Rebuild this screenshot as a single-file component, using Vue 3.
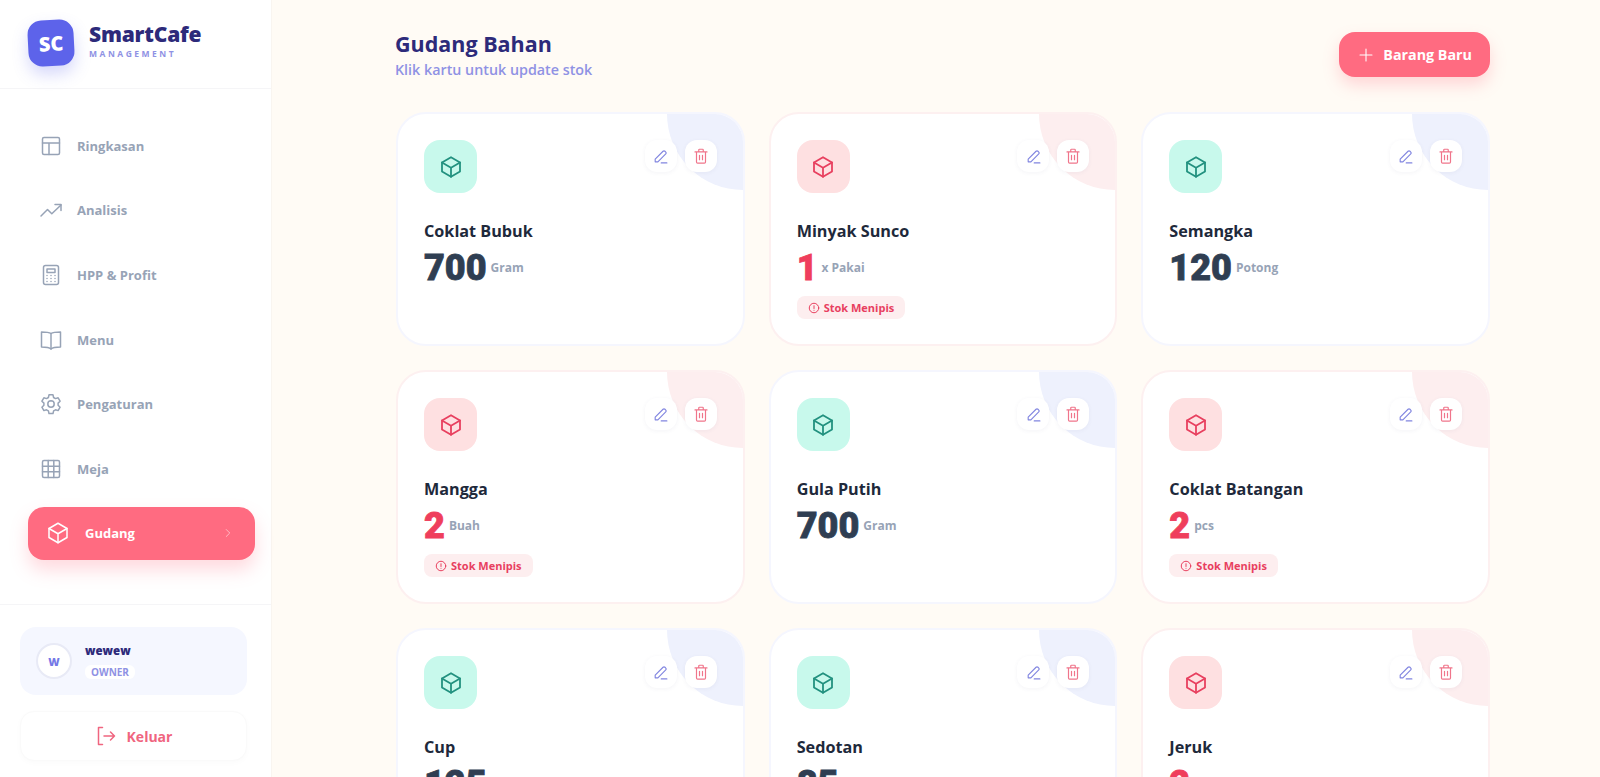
<template>
  <div class="app">
    <aside class="sidebar">
      <div class="brand">
        <div class="logo">SC</div>
        <div class="brand-text">
          <div class="brand-name">SmartCafe</div>
          <div class="brand-sub">MANAGEMENT</div>
        </div>
      </div>

      <nav class="nav">
        <div v-for="item in navItems" :key="item.label" class="nav-item" :class="{ active: item.active }">
          <svg class="nav-icon" viewBox="0 0 24 24" fill="none" stroke="currentColor" stroke-width="1.5" stroke-linecap="round" stroke-linejoin="round">
            <path v-for="d in item.paths" :key="d" :d="d" />
          </svg>
          <span class="nav-label">{{ item.label }}</span>
          <svg v-if="item.active" class="nav-chevron" viewBox="0 0 24 24" fill="none" stroke="currentColor" stroke-width="1.5" stroke-linecap="round" stroke-linejoin="round">
            <path d="M9 6l6 6-6 6" />
          </svg>
        </div>
      </nav>

      <div class="side-bottom">
        <div class="user">
          <div class="avatar">W</div>
          <div>
            <div class="user-name">wewew</div>
            <span class="user-role">OWNER</span>
          </div>
        </div>
        <button class="logout">
          <svg class="logout-icon" viewBox="0 0 24 24" fill="none" stroke="currentColor" stroke-width="1.5" stroke-linecap="round" stroke-linejoin="round">
            <path d="M7.500 3.500H3.500v17h4" />
            <path d="M9 12h10.500M15.500 8l4 4-4 4" />
          </svg>
          Keluar
        </button>
      </div>
    </aside>

    <main class="main">
      <header class="head">
        <div class="head-text">
          <h1 class="title">Gudang Bahan</h1>
          <p class="subtitle">Klik kartu untuk update stok</p>
        </div>
        <button class="add-btn">
          <svg class="add-icon" viewBox="0 0 24 24" fill="none" stroke="currentColor" stroke-width="1.6" stroke-linecap="round">
            <path d="M12 3v18M3 12h18" />
          </svg>
          Barang Baru
        </button>
      </header>

      <section class="grid">
        <article v-for="card in items" :key="card.name" class="card" :class="{ low: isLow(card) }">
          <div class="corner"></div>
          <div class="card-top">
            <div class="box">
              <svg class="box-icon" viewBox="0 0 24 24" fill="none" stroke="currentColor" stroke-width="1.8" stroke-linecap="round" stroke-linejoin="round">
                <path :d="cubeOutline" />
                <path :d="cubeInner" />
              </svg>
            </div>
            <div class="actions">
              <button class="act edit">
                <svg viewBox="0 0 24 24" fill="none" stroke="currentColor" stroke-width="1.600" stroke-linecap="round" stroke-linejoin="round">
                  <path d="M4.500 19.500v-3.800L15.600 4.600a1.900 1.900 0 0 1 2.700 0l1.100 1.100a1.900 1.900 0 0 1 0 2.700L8.300 19.500H4.500" />
                  <path d="M13 21h8" />
                </svg>
              </button>
              <button class="act del">
                <svg viewBox="0 0 24 24" fill="none" stroke="currentColor" stroke-width="1.600" stroke-linecap="round" stroke-linejoin="round">
                  <path d="M4 6.500h16M9 6.500V4a1 1 0 0 1 1-1h4a1 1 0 0 1 1 1v2.500M6 6.500V20a1.500 1.500 0 0 0 1.500 1.500h9A1.500 1.500 0 0 0 18 20V6.500M10 11v6M14 11v6" />
                </svg>
              </button>
            </div>
          </div>
          <h3 class="name">{{ card.name }}</h3>
          <div class="stock">
            <span class="qty">{{ card.qty }}</span>
            <span class="unit">{{ card.unit }}</span>
          </div>
          <div v-if="isLow(card)" class="warn">
            <svg class="warn-icon" viewBox="0 0 24 24" fill="none" stroke="currentColor" stroke-width="2" stroke-linecap="round">
              <circle cx="12" cy="12" r="9.500" />
              <path d="M12 7.500v5.500M12 16.500v.1" />
            </svg>
            Stok Menipis
          </div>
        </article>
      </section>
    </main>
  </div>
</template>

<script setup>
const cubeOutline = "M12 2.250l9 5.250v9l-9 5.250-9-5.250v-9z";
const cubeInner = "M3 7.500l9 5.250 9-5.250M12 12.750v9";

const navItems = [
  { label: "Ringkasan", paths: ["M5 3.500h14A1.500 1.500 0 0 1 20.500 5v14a1.500 1.500 0 0 1-1.500 1.500H5A1.500 1.500 0 0 1 3.500 19V5A1.500 1.500 0 0 1 5 3.500z", "M3.500 9h17M10 9v11.500"] },
  { label: "Analisis", paths: ["M2 18l6.500-6.500 4.300 4.300L22 7", "M16 6.500h6v6"] },
  { label: "HPP & Profit", paths: ["M6.500 2.500h11A2 2 0 0 1 19.500 4.500v15a2 2 0 0 1-2 2h-11a2 2 0 0 1-2-2v-15a2 2 0 0 1 2-2z", "M8 6h8v3.500H8z", "M8 12.500h.01M12 12.500h.01M16 12.500h.01M8 15.500h.01M12 15.500h.01M16 15.500h.01M8 18.500h.01M12 18.500h.01M16 18.500h.01"] },
  { label: "Menu", paths: ["M12 5.500C10.500 4.500 8 4 2.500 4v15C8 19 10.500 19.500 12 21 13.500 19.500 16 19 21.500 19V4C16 4 13.500 4.500 12 5.500z", "M12 5.500v15.500"] },
  { label: "Pengaturan", paths: ["M10 2.800h4l.6 2.700 1.900 1.100 2.600-.8 2 3.400-2 1.900v2.200l2 1.900-2 3.400-2.600-.8-1.900 1.100-.6 2.700h-4l-.6-2.700-1.900-1.100-2.600.8-2-3.400 2-1.900v-2.200l-2-1.900 2-3.400 2.600.8 1.900-1.100z", "M12 8.800a3.200 3.200 0 1 0 0 6.400 3.200 3.200 0 0 0 0-6.400z"] },
  { label: "Meja", paths: ["M5 3.500h14A1.500 1.500 0 0 1 20.500 5v14a1.500 1.500 0 0 1-1.500 1.500H5A1.500 1.500 0 0 1 3.500 19V5A1.500 1.500 0 0 1 5 3.500z", "M3.500 9.200h17M3.500 14.800h17M9.200 3.500v17M14.800 3.500v17"] },
  { label: "Gudang", active: true, paths: [cubeOutline, cubeInner] },
];

const items = [
  { name: "Coklat Bubuk", qty: 700, unit: "Gram" },
  { name: "Minyak Sunco", qty: 1, unit: "x Pakai" },
  { name: "Semangka", qty: 120, unit: "Potong" },
  { name: "Mangga", qty: 2, unit: "Buah" },
  { name: "Gula Putih", qty: 700, unit: "Gram" },
  { name: "Coklat Batangan", qty: 2, unit: "pcs" },
  { name: "Cup", qty: 125, unit: "pcs" },
  { name: "Sedotan", qty: 85, unit: "pcs" },
  { name: "Jeruk", qty: 2, unit: "Buah" },
];

const isLow = (card) => card.qty < 10;
</script>

<style>
html,
body {
  margin: 0;
  height: 100%;
  overflow: hidden;
}
</style>

<style scoped>
.app {
  display: flex;
  height: 777px;
  overflow: hidden;
  background: #fffbf5;
  font-family: "Open Sans", "Noto Sans", sans-serif;
}
.sidebar {
  width: 272px;
  flex-shrink: 0;
  box-sizing: border-box;
  background: #fff;
  display: flex;
  flex-direction: column;
  border-right: 1px solid #f9f5f0;
}
.brand {
  height: 89px;
  box-sizing: border-box;
  display: flex;
  align-items: center;
  gap: 15px;
  padding: 0 0 3px 28px;
  border-bottom: 1px solid #f5f5f7;
}
.brand-text {
  margin-bottom: 2px;
}
.logo {
  width: 46px;
  height: 46px;
  border-radius: 14px;
  background: #5d63ea;
  color: #fff;
  font-weight: 800;
  font-size: 20px;
  display: flex;
  align-items: center;
  justify-content: center;
  transform: rotate(-3deg);
  box-shadow: 0 8px 16px rgba(93, 99, 234, 0.25);
}
.brand-name {
  font-weight: 800;
  font-size: 21px;
  line-height: 25px;
  color: #2d2a7a;
  letter-spacing: -0.2px;
}
.brand-sub {
  font-size: 8.500px;
  font-weight: 700;
  letter-spacing: 2.500px;
  color: #8f92e4;
  line-height: 14px;
}
.nav {
  flex: 1;
  display: flex;
  flex-direction: column;
  gap: 11.100px;
  padding: 30px 16px 0 28px;
}
.nav-item {
  height: 53.500px;
  display: flex;
  align-items: center;
  gap: 14px;
  padding-left: 11px;
  color: #97a3b6;
  font-size: 13px;
  font-weight: 700;
}
.nav-item.active {
  background: #ff6b81;
  color: #fff;
  border-radius: 16px;
  padding: 0 20px 0 18px;
  gap: 15px;
  box-shadow: 0 10px 18px rgba(255, 107, 129, 0.25);
}
.nav-icon {
  width: 24px;
  height: 24px;
  flex-shrink: 0;
}
.nav-label {
  flex: 1;
}
.nav-chevron {
  width: 14px;
  height: 14px;
  opacity: 0.6;
}
.side-bottom {
  border-top: 1px solid #f5f5f7;
  padding: 22px 24px 16px 20px;
  display: flex;
  flex-direction: column;
  gap: 16px;
}
.user {
  height: 68px;
  box-sizing: border-box;
  border-radius: 16px;
  background: #f5f7ff;
  display: flex;
  align-items: center;
  gap: 13px;
  padding: 0 16px;
}
.avatar {
  width: 36px;
  height: 36px;
  box-sizing: border-box;
  border-radius: 50%;
  background: #fff;
  border: 2px solid #e8eaf6;
  color: #7478e6;
  font-size: 11px;
  font-weight: 800;
  display: flex;
  align-items: center;
  justify-content: center;
}
.user-name {
  font-size: 11.500px;
  font-weight: 800;
  color: #2d2a7a;
  line-height: 17px;
}
.user-role {
  display: inline-block;
  margin-top: 2px;
  padding: 0 6px;
  border-radius: 6px;
  background: #fff;
  font-size: 10px;
  font-weight: 700;
  line-height: 14px;
  color: #8f92e4;
}
.logout {
  height: 50px;
  border: 1px solid #fafafa;
  border-radius: 14px;
  background: #fff;
  color: #f0657f;
  font-family: inherit;
  font-size: 14px;
  font-weight: 700;
  display: flex;
  align-items: center;
  justify-content: center;
  gap: 8px;
  box-shadow: 0 2px 6px rgba(0, 0, 0, 0.02);
}
.logout-icon {
  width: 24px;
  height: 24px;
}
.main {
  flex: 1;
  padding: 30px 110px 0 124px;
  min-width: 0;
}
.head {
  display: flex;
  justify-content: space-between;
  align-items: flex-start;
  height: 82px;
}
.head-text {
  margin-left: -1px;
}
.title {
  margin: 0;
  font-size: 21.500px;
  line-height: 28px;
  font-weight: 700;
  color: #2d2a7a;
}
.subtitle {
  margin: 2px 0 0;
  font-size: 14.300px;
  line-height: 20px;
  font-weight: 600;
  color: #8f92e4;
}
.add-btn {
  height: 45px;
  padding: 0 18px 0 19px;
  border: none;
  border-radius: 16px;
  background: #ff6b81;
  color: #fff;
  font-family: inherit;
  font-size: 14.300px;
  font-weight: 700;
  display: flex;
  align-items: center;
  gap: 9px;
  margin-top: 2px;
  box-shadow: 0 8px 16px rgba(255, 107, 129, 0.25);
}
.add-icon {
  width: 16px;
  height: 16px;
}
.grid {
  display: grid;
  grid-template-columns: repeat(3, 1fr);
  gap: 24px;
}
.card {
  position: relative;
  height: 234px;
  box-sizing: border-box;
  background: #fff;
  border: 2px solid #f5f6fe;
  border-radius: 30px;
  padding: 26px 26px 0;
  overflow: hidden;
}
.card.low {
  border-color: #fdf0f0;
}
.corner {
  position: absolute;
  top: 0;
  right: 0;
  width: 76px;
  height: 76px;
  background: #eef1fd;
  border-bottom-left-radius: 76px;
}
.low .corner {
  background: #fdeeef;
}
.card-top {
  position: relative;
  display: flex;
  justify-content: space-between;
  align-items: flex-start;
}
.box {
  width: 53px;
  height: 53px;
  border-radius: 16px;
  background: #c8f9ec;
  color: #22917f;
  display: flex;
  align-items: center;
  justify-content: center;
}
.low .box {
  background: #fee0e1;
  color: #e8405f;
}
.box-icon {
  width: 24px;
  height: 24px;
}
.actions {
  display: flex;
  gap: 8px;
}
.act {
  width: 32px;
  height: 32px;
  border: none;
  padding: 0;
  border-radius: 12px;
  background: #fff;
  display: flex;
  align-items: center;
  justify-content: center;
  box-shadow: 0 1px 4px rgba(60, 60, 120, 0.06);
}
.act svg {
  width: 17px;
  height: 17px;
}
.del svg {
  width: 18px;
  height: 18px;
}
.edit {
  color: #8185e0;
}
.del {
  color: #f0758b;
}
.name {
  position: relative;
  margin: 27px 0 0;
  font-size: 16.200px;
  line-height: 22px;
  font-weight: 700;
  color: #1e293b;
}
.stock {
  position: relative;
  display: flex;
  align-items: center;
  gap: 4px;
  margin-top: 3px;
  height: 46px;
}
.qty {
  font-family: Roboto, "Open Sans", sans-serif;
  font-size: 36px;
  font-weight: 900;
  color: #2f3e52;
  -webkit-text-stroke: 0.8px currentColor;
}
.low .qty {
  color: #ef3e5c;
}
.unit {
  font-size: 12px;
  font-weight: 700;
  color: #97a3b6;
  margin-top: -1px;
}
.warn {
  display: inline-flex;
  align-items: center;
  gap: 4px;
  height: 23px;
  margin-top: 5px;
  padding: 0 11px;
  border-radius: 8px;
  background: #fdeeef;
  color: #e8405f;
  font-size: 11px;
  font-weight: 700;
}
.warn-icon {
  width: 12px;
  height: 12px;
}
</style>
